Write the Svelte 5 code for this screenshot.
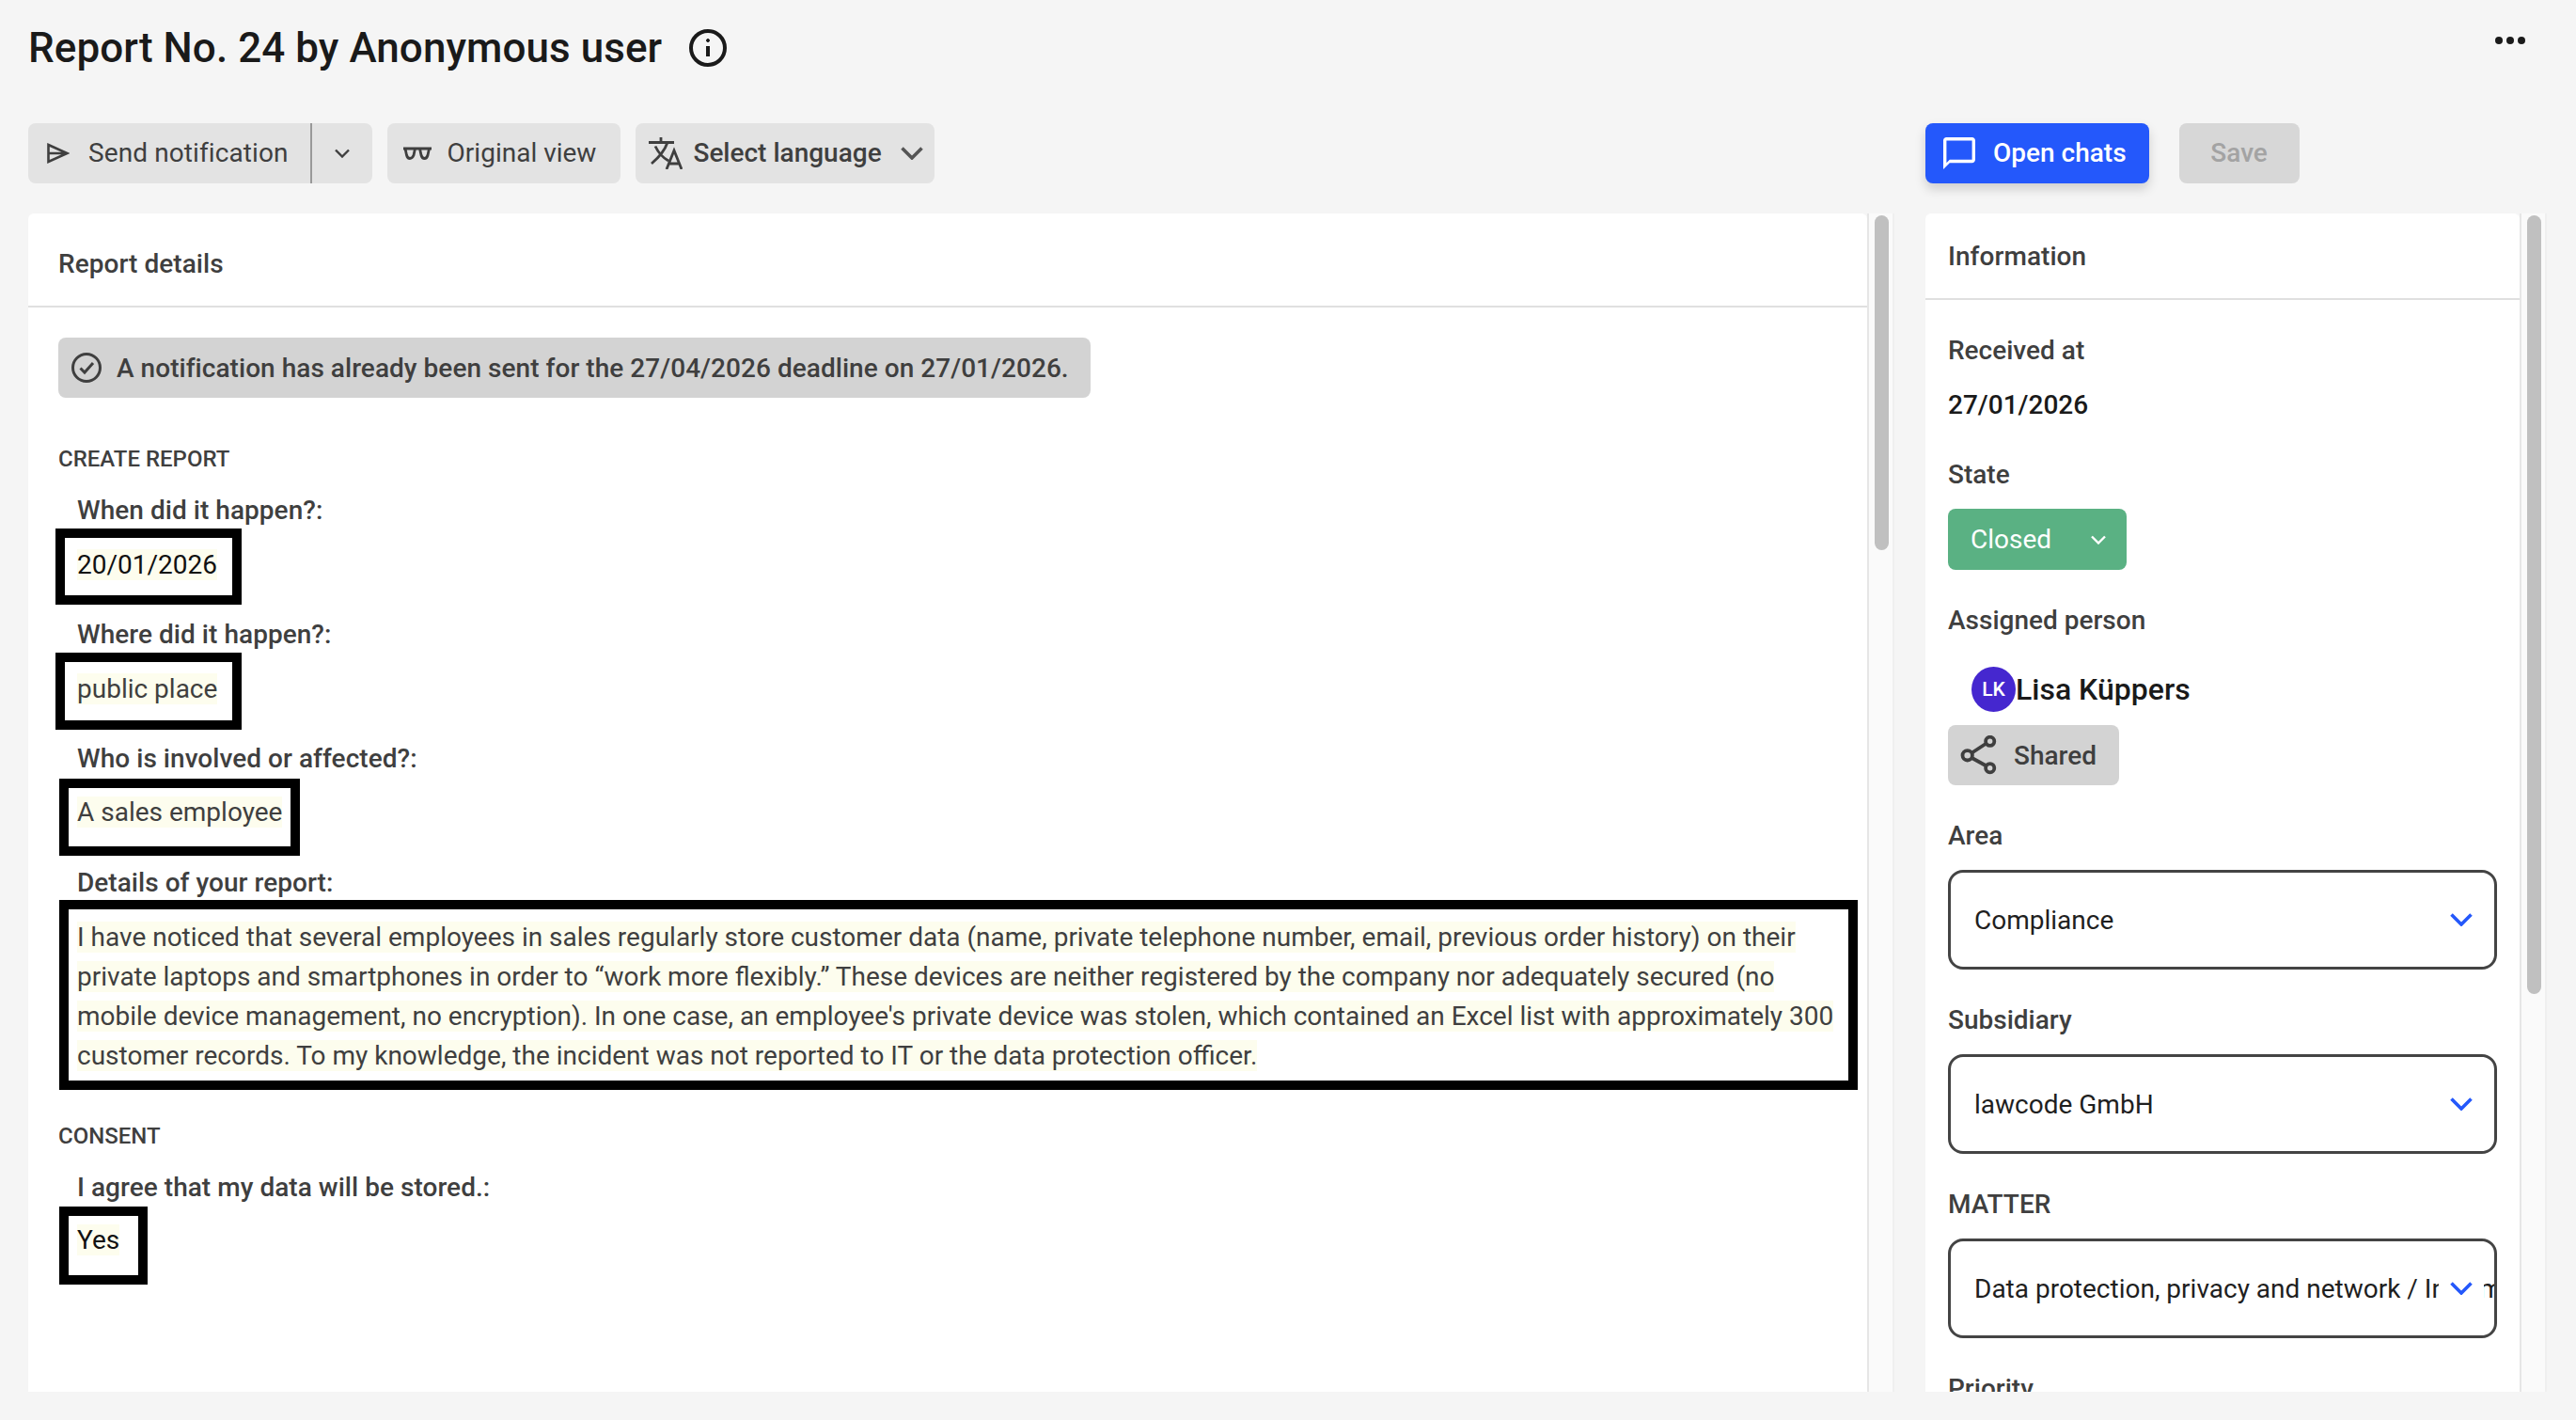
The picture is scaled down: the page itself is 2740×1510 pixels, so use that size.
<script>
    const details = [
        { label: "When did it happen?:", value: "20/01/2026", cls: "date" },
        { label: "Where did it happen?:", value: "public place", cls: "place" },
        { label: "Who is involved or affected?:", value: "A sales employee", cls: "who" },
        {
            label: "Details of your report:",
            value: "I have noticed that several employees in sales regularly store customer data (name, private telephone number, email, previous order history) on their private laptops and smartphones in order to “work more flexibly.” These devices are neither registered by the company nor adequately secured (no mobile device management, no encryption). In one case, an employee's private device was stolen, which contained an Excel list with approximately 300 customer records. To my knowledge, the incident was not reported to IT or the data protection officer.",
            cls: "long"
        }
    ];

    const selects = [
        { label: "Area", value: "Compliance" },
        { label: "Subsidiary", value: "lawcode GmbH" },
        { label: "MATTER", value: "Data protection, privacy and network / Information security" }
    ];
</script>

<div class="page">
    <header class="titlebar">
        <h1>Report No. 24 by Anonymous user</h1>
        <svg class="info" viewBox="0 0 40 40" width="40" height="40" fill="none" stroke="#1a1a1a" stroke-width="4">
            <circle cx="20" cy="20" r="18" />
            <path d="M20 18v11" />
            <circle cx="20" cy="12" r="1.5" fill="#1a1a1a" stroke-width="1" />
        </svg>
        <svg class="dots" viewBox="0 0 32 8" width="32" height="8" fill="#1a1a1a">
            <circle cx="4" cy="4" r="4" />
            <circle cx="16" cy="4" r="4" />
            <circle cx="28" cy="4" r="4" />
        </svg>
    </header>

    <div class="columns toolbar">
        <div class="actions">
            <div class="btn split">
                <span class="split-main">
                    <svg viewBox="0 0 24 22" width="24" height="22" fill="none" stroke="#3f3f3f" stroke-width="2.6">
                        <path d="M1.5 2l20 9-20 9zM1.5 11h20" />
                    </svg>
                    <span class="send-label">Send notification</span>
                </span>
                <span class="split-arrow">
                    <svg viewBox="0 0 16 10" width="16" height="10" fill="none" stroke="#3f3f3f" stroke-width="2.4">
                        <path d="M1 1.5l7 7 7-7" />
                    </svg>
                </span>
            </div>
            <div class="btn original">
                <svg viewBox="0 0 30 14" width="30" height="14" fill="none" stroke="#3f3f3f" stroke-width="2.8">
                    <path d="M0 2h30M2 2l1.500 7q1 3.500 3.500 3.500t4-3.500l1.500-7zM17.500 2l1.500 7q1 3.500 3.500 3.500t3.500-3.500l1.500-7z" />
                </svg>
                <span>Original view</span>
            </div>
            <div class="btn language">
                <svg viewBox="0 0 36 34" width="36" height="34" fill="none" stroke="#3f3f3f" stroke-width="2.8">
                    <path d="M0 5.500h27M13 0v5.500M20 5.500Q16 17 3 28M7 9.500Q12 20 21 25M19 34l8-20 8 20M22 28h10" />
                </svg>
                <span class="strong">Select language</span>
                <svg class="lang-arrow" viewBox="0 0 24 14" width="24" height="14" fill="none" stroke="#555" stroke-width="3.6">
                    <path d="M1.500 1.500L12 12 22.500 1.500" />
                </svg>
            </div>
        </div>
        <div class="actions side-actions">
            <div class="btn chats">
                <svg viewBox="2 2 20 20" width="34" height="34" fill="#fff">
                    <path d="M20 2H4c-1.100 0-2 .9-2 2v18l4-4h14c1.100 0 2-.9 2-2V4c0-1.100-.9-2-2-2zm0 14H6l-2 2V4h16v12z" />
                </svg>
                <span>Open chats</span>
            </div>
            <div class="btn save">Save</div>
        </div>
    </div>

    <div class="columns content">
        <div class="panel">
            <section class="card">
                <div class="card-head report-head">Report details</div>
                <div class="report-body">
                    <div class="alert">
                        <svg viewBox="0 0 32 32" width="32" height="32" fill="none" stroke="#3f3f3f" stroke-width="3">
                            <circle cx="16" cy="16" r="14.500" />
                            <path d="M9.500 16.500l4.500 4.500 9-10" />
                        </svg>
                        <span>A notification has already been sent for the 27/04/2026 deadline on 27/01/2026.</span>
                    </div>

                    <h2>CREATE REPORT</h2>
                    {#each details as d}
                        <div class="question {d.cls}">{d.label}</div>
                        <div class="answer {d.cls}"><span class="mark">{d.value}</span></div>
                    {/each}

                    <h2 class="consent">CONSENT</h2>
                    <div class="question yes">I agree that my data will be stored.:</div>
                    <div class="answer yes"><span class="mark">Yes</span></div>
                </div>
            </section>
            <div class="track"><div class="thumb short"></div></div>
        </div>

        <div class="panel">
            <aside class="card">
                <div class="card-head info-head">Information</div>
                <div class="info-body">
                    <div class="label received">Received at</div>
                    <div class="value">27/01/2026</div>

                    <div class="label gap">State</div>
                    <div class="state">
                        <span>Closed</span>
                        <svg viewBox="0 0 16 10" width="16" height="10" fill="none" stroke="#fff" stroke-width="2.400">
                            <path d="M1 1.500l7 7 7-7" />
                        </svg>
                    </div>

                    <div class="label gap">Assigned person</div>
                    <div class="person">
                        <span class="avatar">LK</span>
                        <span class="person-name">Lisa Küppers</span>
                    </div>
                    <div class="shared">
                        <svg viewBox="0 0 40 42" width="40" height="42" fill="none" stroke="#3f3f3f" stroke-width="3.800">
                            <path d="M13.500 18.500l14.500-9.500M13.500 24l14.500 8" />
                            <circle cx="8.700" cy="21.300" r="5.200" />
                            <circle cx="32.700" cy="6.300" r="4.600" />
                            <circle cx="32.700" cy="34.700" r="4.600" />
                        </svg>
                        <span>Shared</span>
                    </div>

                    {#each selects as s}
                        <div class="label gap">{s.label}</div>
                        <div class="select">
                            <span class="select-text">{s.value}</span>
                            <span class="select-arrow">
                                <svg viewBox="0 0 24 14" width="24" height="14" fill="none" stroke="#2458fb" stroke-width="3.600">
                                    <path d="M1.500 1.500L12 12 22.500 1.500" />
                                </svg>
                            </span>
                        </div>
                    {/each}

                    <div class="label gap">Priority</div>
                </div>
            </aside>
            <div class="track"><div class="thumb tall"></div></div>
        </div>
    </div>
</div>

<style>
    :global(html),
    :global(body) {
        margin: 0;
        height: 100%;
        overflow: hidden;
        background: #f5f5f5;
    }

    .page {
        height: 1510px;
        padding: 0 54px 30px 30px;
        box-sizing: border-box;
        background: #f5f5f5;
        font-family: Roboto, "Liberation Sans", sans-serif;
        font-size: 28px;
        color: #3f3f3f;
    }

    .titlebar {
        display: flex;
        align-items: flex-start;
        height: 131px;
        padding-top: 29px;
        box-sizing: border-box;
    }

    h1 {
        margin: 0;
        font-size: 44px;
        line-height: 44px;
        font-weight: 500;
        letter-spacing: 0.06px;
        color: #1a1a1a;
    }

    .info {
        margin: 2px 0 0 29px;
    }

    .dots {
        margin: 10px 0 0 auto;
    }

    .columns {
        display: grid;
        grid-template-columns: 1985px 661px;
        column-gap: 33px;
    }

    .toolbar {
        height: 64px;
        margin-bottom: 32px;
    }

    .actions {
        display: flex;
        gap: 16px;
    }

    .side-actions {
        gap: 32px;
    }

    .btn {
        display: flex;
        align-items: center;
        height: 64px;
        box-sizing: border-box;
        border-radius: 8px;
        background: #e3e3e3;
        line-height: 66px;
        white-space: nowrap;
    }

    .split-main {
        display: flex;
        align-items: center;
        height: 100%;
        padding: 0 23px 0 20px;
        border-right: 2px solid #999;
    }

    .send-label {
        margin-left: 20px;
        letter-spacing: 0.1px;
    }

    .split-arrow {
        display: flex;
        justify-content: center;
        width: 64px;
    }

    .original {
        padding: 0 26px 0 17px;
    }

    .original span {
        margin-left: 17px;
    }

    .language {
        padding: 0 12px 0 14px;
    }

    .strong {
        margin-left: 11px;
        font-weight: 500;
    }

    .lang-arrow {
        margin-left: 20px;
    }

    .chats {
        padding: 0 24px 0 19px;
        background: #2458fb;
        color: #fff;
        box-shadow: 0 6px 12px rgba(0, 0, 0, 0.16);
    }

    .chats span {
        margin-left: 19px;
        font-weight: 500;
    }

    .save {
        justify-content: center;
        width: 128px;
        background: #d7d7d7;
        color: #a3a3a3;
        font-weight: 500;
    }

    .content {
        height: 1253px;
    }

    .panel {
        display: flex;
        height: 1253px;
        overflow: hidden;
    }

    .card {
        flex: 1;
        min-width: 0;
        background: #fff;
        border-radius: 6px 6px 0 0;
        overflow: hidden;
    }

    .track {
        flex: none;
        width: 29px;
        box-sizing: border-box;
        padding: 2px 4px 0 6px;
        border-left: 2px solid #e6e6e6;
        border-right: 2px solid #efefef;
        background: #fafafa;
    }

    .thumb {
        border-radius: 8px;
        background: #c0c0c0;
    }

    .thumb.short {
        height: 356px;
    }

    .thumb.tall {
        height: 828px;
    }

    .card-head {
        box-sizing: border-box;
        border-bottom: 2px solid #e0e0e0;
        font-weight: 500;
        line-height: 40px;
        letter-spacing: 0.05px;
    }

    .report-head {
        height: 100px;
        padding: 34px 32px 0;
    }

    .info-head {
        height: 92px;
        padding: 26px 24px 0;
    }

    .report-body {
        padding: 32px 10px 0 32px;
    }

    .alert {
        display: flex;
        align-items: center;
        width: fit-content;
        height: 64px;
        padding: 0 23px 0 14px;
        border-radius: 8px;
        background: #d3d3d3;
        font-weight: 500;
        letter-spacing: 0.04px;
    }

    .alert span {
        margin-left: 16px;
    }

    h2 {
        margin: 49px 0 0;
        font-size: 24px;
        line-height: 32px;
        font-weight: 500;
        color: #3f3f3f;
    }

    h2.consent {
        margin-top: 33px;
    }

    .question {
        height: 38px;
        padding-left: 20px;
        font-weight: 500;
        line-height: 40px;
        letter-spacing: 0.04px;
    }

    .question.date {
        margin-top: 19px;
    }

    .question.place {
        margin-top: 12px;
    }

    .question.who {
        margin-top: 11px;
    }

    .question.long {
        margin-top: 9px;
    }

    .question.yes {
        margin-top: 19px;
    }

    .answer {
        width: fit-content;
        border: 10px solid #000;
        line-height: 42px;
    }

    .answer.date {
        margin: 1px 0 0 -3px;
        padding: 8px 16px 11px 13px;
    }

    .answer.place {
        margin: 1px 0 0 -3px;
        padding: 8px 16px 12px 13px;
    }

    .answer.who {
        margin: 3px 0 0 1px;
        padding: 5px 9px 15px 9px;
    }

    .answer.long {
        margin: 0 0 0 1px;
        padding: 9px 11px 5px 9px;
    }

    .answer.yes {
        margin: 2px 0 0 1px;
        padding: 5px 20px 16px 9px;
    }

    .mark {
        background: #fdfdee;
    }

    .answer.date .mark,
    .answer.yes .mark {
        color: #111;
    }

    .info-body {
        padding: 34px 24px 0;
    }

    .label {
        height: 40px;
        font-weight: 500;
        line-height: 42px;
    }

    .label.received {
        line-height: 40px;
    }

    .gap {
        margin-top: 33px;
    }

    .value {
        margin-top: 18px;
        font-weight: 500;
        line-height: 40px;
        color: #1a1a1a;
    }

    .state {
        display: flex;
        align-items: center;
        justify-content: space-between;
        width: 190px;
        height: 65px;
        margin-top: 17px;
        padding: 0 22px 0 24px;
        box-sizing: border-box;
        border-radius: 8px;
        background: #5ab183;
        color: #fff;
    }

    .person {
        display: flex;
        align-items: center;
        margin-top: 30px;
        padding-left: 25px;
    }

    .avatar {
        display: flex;
        align-items: center;
        justify-content: center;
        width: 47px;
        height: 48px;
        border-radius: 50%;
        background: #4527cf;
        color: #fff;
        font-size: 21px;
        font-weight: 500;
    }

    .person-name {
        font-size: 32px;
        line-height: 48px;
        font-weight: 500;
        color: #1a1a1a;
    }

    .shared {
        display: flex;
        align-items: center;
        width: 182px;
        height: 64px;
        margin-top: 14px;
        padding-left: 12px;
        box-sizing: border-box;
        border-radius: 8px;
        background: #d3d3d3;
        font-weight: 500;
    }

    .shared span {
        margin-left: 18px;
    }

    .select {
        position: relative;
        display: flex;
        align-items: center;
        width: 584px;
        height: 106px;
        margin-top: 17px;
        padding-left: 25px;
        box-sizing: border-box;
        overflow: hidden;
        border: 3px solid #444;
        border-radius: 16px;
        color: #1f1f1f;
    }

    .select-text {
        white-space: nowrap;
    }

    /* sits on top of the value, the end of a long text shows again behind it */
    .select-arrow {
        position: absolute;
        top: 0;
        bottom: 0;
        left: 519px;
        display: flex;
        align-items: center;
        justify-content: center;
        width: 48px;
        background: #fff;
    }
</style>
